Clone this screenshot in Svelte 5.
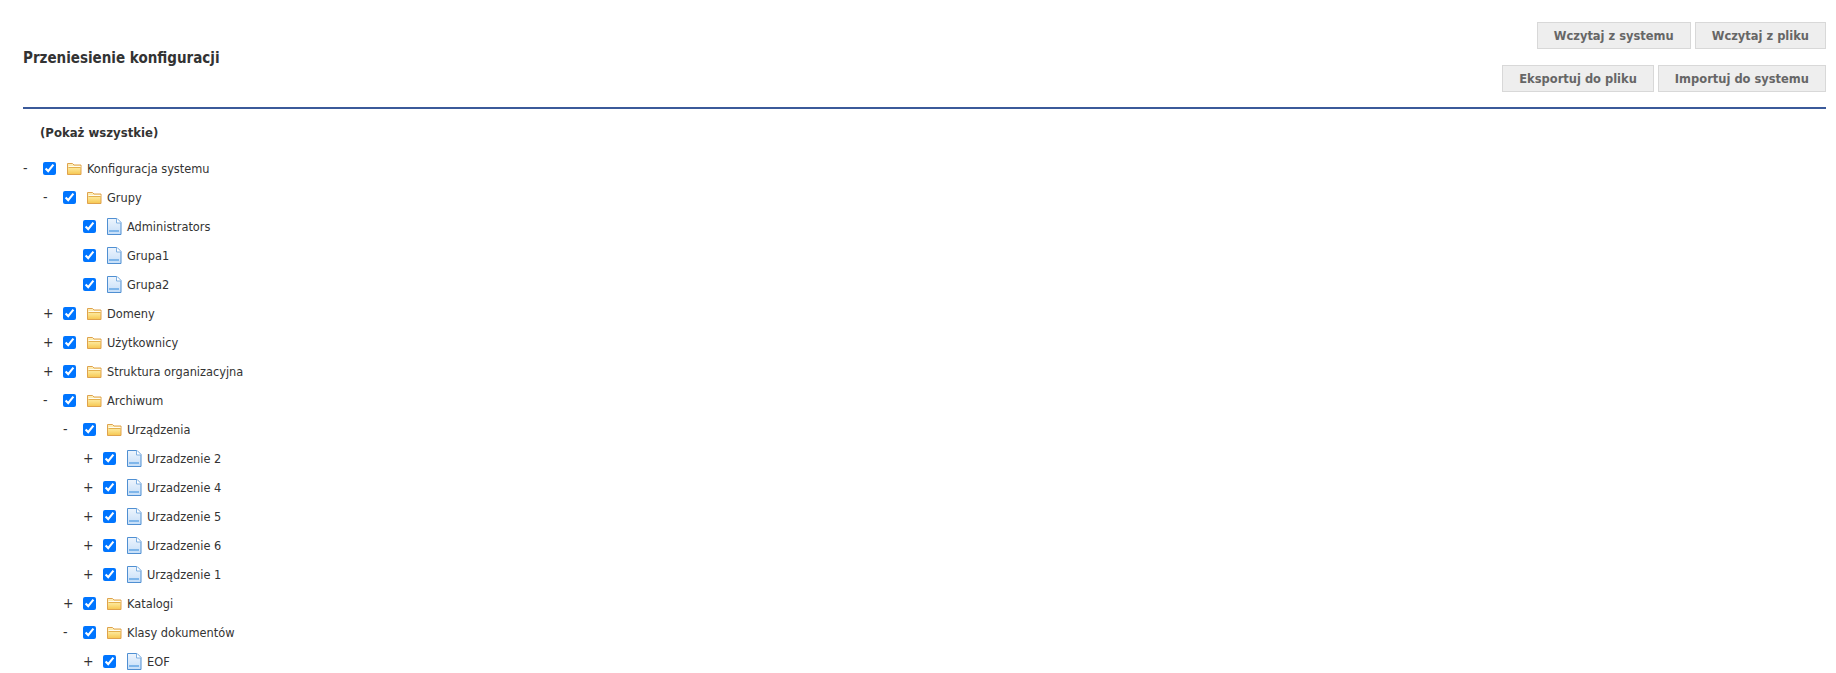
<script>
  const rows = [
    { d: 0, t: '-', k: 'folder', n: 'Konfiguracja systemu' },
    { d: 1, t: '-', k: 'folder', n: 'Grupy' },
    { d: 2, t: '', k: 'file', n: 'Administrators' },
    { d: 2, t: '', k: 'file', n: 'Grupa1' },
    { d: 2, t: '', k: 'file', n: 'Grupa2' },
    { d: 1, t: '+', k: 'folder', n: 'Domeny' },
    { d: 1, t: '+', k: 'folder', n: 'Użytkownicy' },
    { d: 1, t: '+', k: 'folder', n: 'Struktura organizacyjna' },
    { d: 1, t: '-', k: 'folder', n: 'Archiwum' },
    { d: 2, t: '-', k: 'folder', n: 'Urządzenia' },
    { d: 3, t: '+', k: 'file', n: 'Urzadzenie 2' },
    { d: 3, t: '+', k: 'file', n: 'Urzadzenie 4' },
    { d: 3, t: '+', k: 'file', n: 'Urzadzenie 5' },
    { d: 3, t: '+', k: 'file', n: 'Urzadzenie 6' },
    { d: 3, t: '+', k: 'file', n: 'Urządzenie 1' },
    { d: 2, t: '+', k: 'folder', n: 'Katalogi' },
    { d: 2, t: '-', k: 'folder', n: 'Klasy dokumentów' },
    { d: 3, t: '+', k: 'file', n: 'EOF' }
  ];
</script>

<div class="page">
  <svg class="defs" width="0" height="0" aria-hidden="true">
    <defs>
      <linearGradient id="fg" x1="0" y1="0" x2="0" y2="1">
        <stop offset="0" stop-color="#fdf0c0" />
        <stop offset="0.5" stop-color="#fce48f" />
        <stop offset="1" stop-color="#f6c64f" />
      </linearGradient>
      <linearGradient id="dg" x1="0" y1="0" x2="0" y2="1">
        <stop offset="0" stop-color="#eef5fd" />
        <stop offset="1" stop-color="#c5def8" />
      </linearGradient>
    </defs>
  </svg>
  <header class="head">
    <h1>Przeniesienie konfiguracji</h1>
    <div class="actions">
      <div class="line">
        <button>Wczytaj z systemu</button>
        <button>Wczytaj z pliku</button>
      </div>
      <div class="line">
        <button>Eksportuj do pliku</button>
        <button>Importuj do systemu</button>
      </div>
    </div>
  </header>
  <div class="showall">(Pokaż wszystkie)</div>
  <ul class="tree">
    {#each rows as r}
      <li class="row" style="padding-left:{r.d * 20}px">
        <span class="toggle">{r.t}</span>
        <input type="checkbox" checked />
        {#if r.k === 'folder'}
          <svg class="icon" width="16" height="14" viewBox="0 0 16 14">
            <path d="M.5 12.5V1.5h5l1.5 1.5h7v9.5z" fill="url(#fg)" stroke="#dfa24c" />
            <path d="M1.5 4.5h12" stroke="#fffdf2" />
            <path d="M1.5 5.5h12" stroke="#e3b04e" />
          </svg>
        {:else}
          <svg class="icon" width="16" height="17" viewBox="0 0 16 17">
            <path d="M.5.5h9.5l4 4v12H.5z" fill="url(#dg)" stroke="#4f8fd2" />
            <path d="M9.5.5v4.5h4.5" fill="#fff" stroke="#7fb0e2" />
            <path d="M2 12h10v2H2z" fill="#7fb6ea" />
          </svg>
        {/if}
        <span class="label">{r.n}</span>
      </li>
    {/each}
  </ul>
</div>

<style>
  :global(html), :global(body) {
    margin: 0;
    overflow: hidden;
    background: #fff;
  }
  .page {
    font-family: "DejaVu Sans Condensed", "DejaVu Sans", sans-serif;
    padding: 0 10px 0 23px;
    color: #333;
  }
  .defs {
    position: absolute;
  }
  .head {
    display: flex;
    justify-content: space-between;
    align-items: center;
    padding: 22px 0 15px;
    border-bottom: 2px solid #3b5a9a;
  }
  h1 {
    margin: 2px 0 0;
    font-size: 15px;
    font-weight: bold;
    color: #333;
  }
  .actions {
    display: flex;
    flex-direction: column;
    gap: 16px;
    align-items: flex-end;
  }
  .line {
    display: flex;
    gap: 4px;
  }
  button {
    height: 27px;
    padding: 0 16px;
    background: #eee;
    border: 1px solid #d8d8d8;
    color: #666;
    font: bold 12.75px "DejaVu Sans Condensed", "DejaVu Sans", sans-serif;
  }
  .showall {
    margin: 15px 0 0 17px;
    height: 18px;
    line-height: 18px;
    font-size: 13px;
    font-weight: bold;
    color: #333;
  }
  .tree {
    list-style: none;
    margin: 12px 0 0;
    padding: 0;
  }
  .row {
    display: flex;
    align-items: center;
    height: 29px;
    font-size: 12.65px;
  }
  .toggle {
    width: 20px;
    flex: none;
    font-size: 14px;
    line-height: 13px;
  }
  input {
    margin: 0 11px 0 0;
    width: 13px;
    height: 13px;
    flex: none;
  }
  .icon {
    flex: none;
    margin-right: 4px;
  }
  .label {
    color: #333;
  }
</style>
